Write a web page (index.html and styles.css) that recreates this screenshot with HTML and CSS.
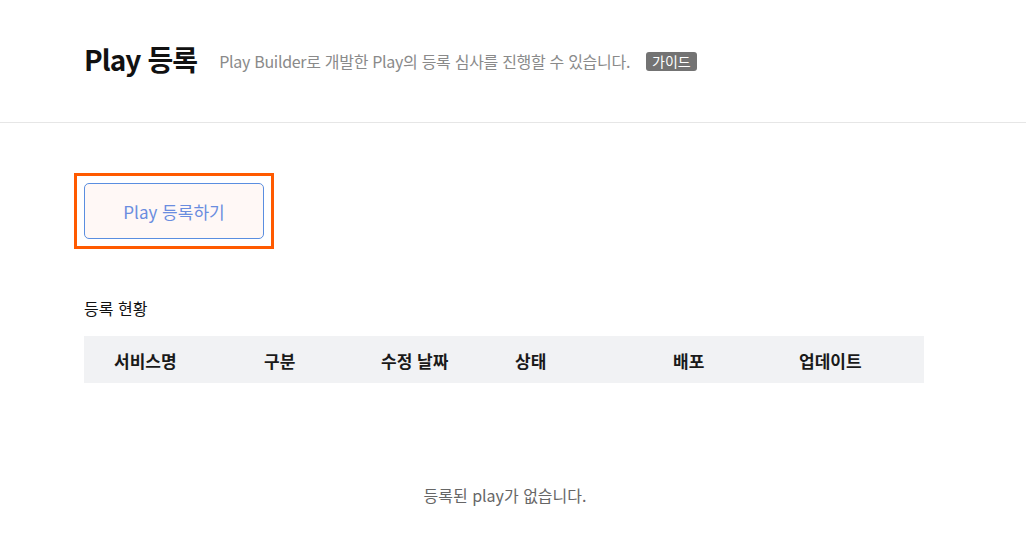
FILE: index.html
```html
<!DOCTYPE html>
<html lang="ko">
<head>
<meta charset="utf-8">
<link rel="stylesheet" href="styles.css">
</head>
<body>
<header class="page-header">
  <h1 class="title">Play 등록</h1>
  <p class="desc">Play Builder로 개발한 Play의 등록 심사를 진행할 수 있습니다.</p>
  <span class="badge">가이드</span>
</header>
<main class="content">
  <div class="focus-ring">
    <button class="reg-btn">Play 등록하기</button>
  </div>
  <h2 class="section-title">등록 현황</h2>
  <div class="table-head">
    <div class="th">서비스명</div>
    <div class="th">구분</div>
    <div class="th">수정 날짜</div>
    <div class="th">상태</div>
    <div class="th">배포</div>
    <div class="th">업데이트</div>
  </div>
  <p class="empty">등록된 play가 없습니다.</p>
</main>
</body>
</html>
```
FILE: styles.css
```css
* { box-sizing: border-box; }
html, body { margin: 0; padding: 0; background: #fff; }
body {
  font-family: "Noto Sans CJK KR", "Noto Sans", sans-serif;
  color: #111;
  width: 1026px;
}
.page-header {
  display: flex;
  align-items: center;
  height: 123px;
  padding: 0 0 4px 84px;
  border-bottom: 1px solid #e6e6e6;
}
.title {
  margin: 0;
  font-size: 28px;
  font-weight: 700;
  color: #111;
  letter-spacing: -0.9px;
}
.desc {
  margin: 4px 0 0 22px;
  font-size: 16px;
  color: #8a8a8a;
  letter-spacing: -0.3px;
}
.badge {
  margin: 4px 0 0 16px;
  background: #737373;
  color: #fff;
  font-size: 14px;
  line-height: 19px;
  padding: 0 6px;
  border-radius: 3px;
}
.content {
  padding: 50px 0 0 84px;
}
.focus-ring {
  display: inline-block;
  margin-left: -10px;
  padding: 7px;
  border: 3px solid #ff5a00;
  background: #fff;
}
.reg-btn {
  display: block;
  width: 180px;
  height: 56px;
  border: 1px solid #5a8ee0;
  border-radius: 5px;
  background: #fff8f6;
  color: #6a8ddf;
  font-family: inherit;
  font-size: 17px;
  padding: 0;
}
.section-title {
  margin: 47px 0 0 0;
  font-size: 16px;
  font-weight: 400;
  color: #111;
  line-height: 24px;
}
.table-head {
  margin-top: 16px;
  width: 840px;
  height: 47px;
  background: #f1f2f4;
  display: grid;
  grid-template-columns: 150px 117px 134px 158px 126px 1fr;
  align-items: center;
  padding-left: 30px;
}
.th {
  font-size: 17px;
  font-weight: 700;
  color: #1a1a1a;
  padding-top: 1px;
}
.empty {
  margin: 100px 0 0 -84px;
  width: 1010px;
  text-align: center;
  font-size: 16px;
  color: #666;
}
```
